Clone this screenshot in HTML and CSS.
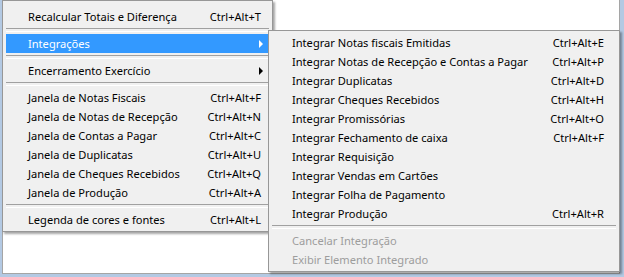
FILE: index.html
```html
<!DOCTYPE html>
<html lang="pt-BR">
  <head>
    <meta charset="UTF-8" />
    <title>Menu Integrações</title>
    <link rel="stylesheet" href="styles.css">
  </head>
  <body>
    <div class="app-window">
      <div class="client-area"></div>

      <!-- Main popup menu -->
      <ul class="popup-menu main-menu">
        <li class="menu-item"><span class="label">Recalcular Totais e Diferença</span><span class="shortcut">Ctrl+Alt+T</span></li>
        <li class="menu-sep"></li>
        <li class="menu-item is-active has-sub"><span class="label">Integrações</span><span class="arrow"></span></li>
        <li class="menu-sep"></li>
        <li class="menu-item has-sub"><span class="label">Encerramento Exercício</span><span class="arrow"></span></li>
        <li class="menu-sep"></li>
        <li class="menu-item"><span class="label">Janela de Notas Fiscais</span><span class="shortcut">Ctrl+Alt+F</span></li>
        <li class="menu-item"><span class="label">Janela de Notas de Recepção</span><span class="shortcut">Ctrl+Alt+N</span></li>
        <li class="menu-item"><span class="label">Janela de Contas a Pagar</span><span class="shortcut">Ctrl+Alt+C</span></li>
        <li class="menu-item"><span class="label">Janela de Duplicatas</span><span class="shortcut">Ctrl+Alt+U</span></li>
        <li class="menu-item"><span class="label">Janela de Cheques Recebidos</span><span class="shortcut">Ctrl+Alt+Q</span></li>
        <li class="menu-item"><span class="label">Janela de Produção</span><span class="shortcut">Ctrl+Alt+A</span></li>
        <li class="menu-sep"></li>
        <li class="menu-item"><span class="label">Legenda de cores e fontes</span><span class="shortcut">Ctrl+Alt+L</span></li>
      </ul>

      <!-- Integrações submenu -->
      <ul class="popup-menu sub-menu">
        <li class="menu-item"><span class="label">Integrar Notas fiscais Emitidas</span><span class="shortcut">Ctrl+Alt+E</span></li>
        <li class="menu-item"><span class="label">Integrar Notas de Recepção e Contas a Pagar</span><span class="shortcut">Ctrl+Alt+P</span></li>
        <li class="menu-item"><span class="label">Integrar Duplicatas</span><span class="shortcut">Ctrl+Alt+D</span></li>
        <li class="menu-item"><span class="label">Integrar Cheques Recebidos</span><span class="shortcut">Ctrl+Alt+H</span></li>
        <li class="menu-item"><span class="label">Integrar Promissórias</span><span class="shortcut">Ctrl+Alt+O</span></li>
        <li class="menu-item"><span class="label">Integrar Fechamento de caixa</span><span class="shortcut">Ctrl+Alt+F</span></li>
        <li class="menu-item"><span class="label">Integrar Requisição</span></li>
        <li class="menu-item"><span class="label">Integrar Vendas em Cartões</span></li>
        <li class="menu-item"><span class="label">Integrar Folha de Pagamento</span></li>
        <li class="menu-item"><span class="label">Integrar Produção</span><span class="shortcut">Ctrl+Alt+R</span></li>
        <li class="menu-sep"></li>
        <li class="menu-item is-disabled"><span class="label">Cancelar Integração</span></li>
        <li class="menu-item is-disabled"><span class="label">Exibir Elemento Integrado</span></li>
      </ul>
    </div>
  </body>
</html>
```

FILE: styles.css
```css
* {
  margin: 0;
  padding: 0;
  box-sizing: border-box;
}

body {
  width: 624px;
  height: 277px;
  overflow: hidden;
  background: #b3c9e3;
  font-family: "Noto Sans", "Open Sans", sans-serif;
  font-size: 11.1px;
  color: #000000;
}

.app-window {
  position: relative;
  width: 624px;
  height: 277px;
  padding: 0 4px 3px 2px;
}

/* White content area behind the popups */
.client-area {
  height: 274px;
  background: #ffffff;
  border: 1px solid #a5a5a5;
  border-top: none;
}

/* Popup menus */
.popup-menu {
  position: absolute;
  list-style: none;
  background: #f0f0f0;
  border: 1px solid #979797;
  box-shadow: 2px 2px 2px rgba(0, 0, 0, 0.35);
}

.main-menu {
  left: 2px;
  top: 0;
  width: 271px;
  padding: 6px 3px 2px 3px;
}

.sub-menu {
  left: 268px;
  top: 30px;
  width: 352px;
  padding: 2px 3px 2px 3px;
  z-index: 2;
}

.menu-item {
  display: flex;
  align-items: center;
  height: 19px;
  white-space: nowrap;
}

.main-menu .menu-item {
  padding: 0 8px 0 22px;
}

.sub-menu .menu-item {
  padding: 0 12px 0 20px;
}

.menu-item .label {
  flex: 1;
}

.menu-item .shortcut {
  text-align: right;
}

.menu-item.is-active {
  background: #3399ff;
  color: #ffffff;
}

.menu-item.is-disabled {
  color: #9d9d9d;
}

/* Submenu arrow */
.arrow {
  width: 0;
  height: 0;
  margin-right: -2px;
  border-top: 4px solid transparent;
  border-bottom: 4px solid transparent;
  border-left: 4px solid #000000;
}

.is-active .arrow {
  border-left-color: #ffffff;
}

.menu-sep {
  height: 8px;
  display: flex;
  align-items: center;
}

.menu-sep::before {
  content: "";
  flex: 1;
  height: 2px;
  border-top: 1px solid #a0a0a0;
  border-bottom: 1px solid #ffffff;
}
```
